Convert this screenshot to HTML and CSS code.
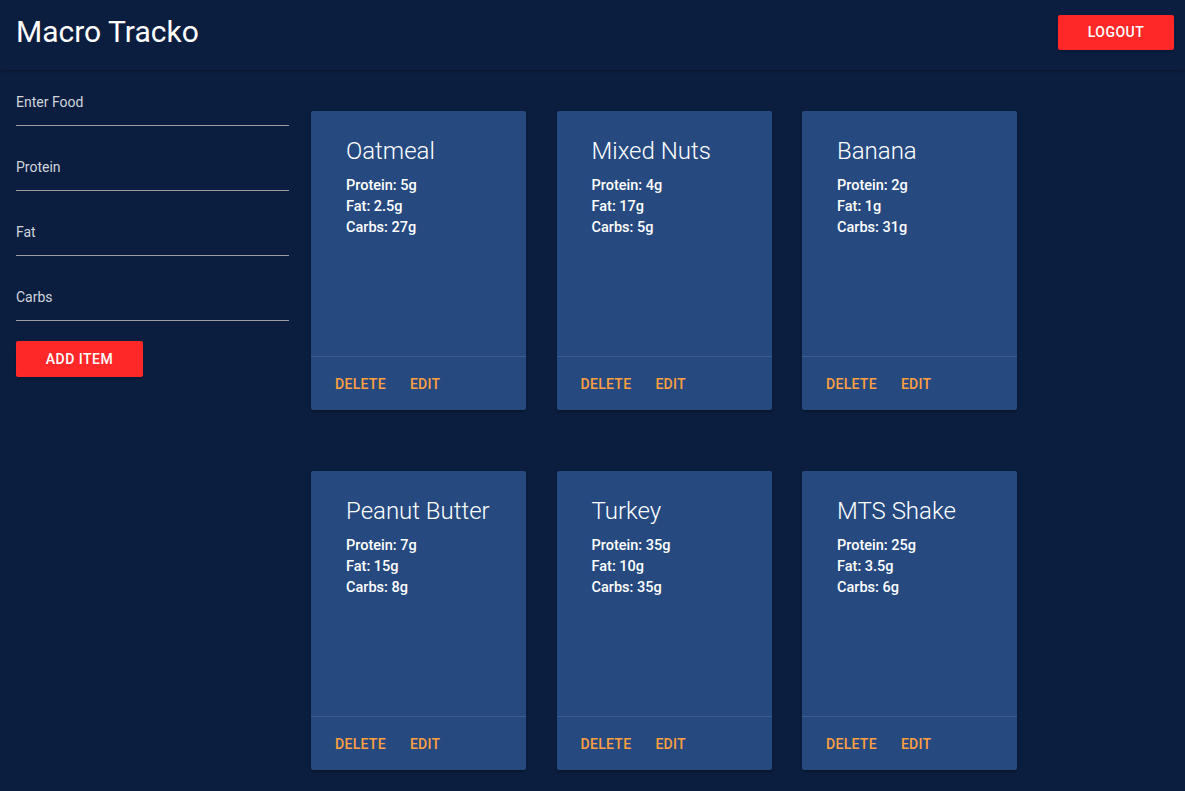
FILE: index.html
```html
<!DOCTYPE html>
<html>
<head>
<meta charset="utf-8">
<link rel="stylesheet" href="styles.css">
</head>
<body>
<header class="topbar">
  <h1 class="brand">Macro Tracko</h1>
  <button class="btn btn-logout">LOGOUT</button>
</header>
<div class="page">
  <aside class="sidebar">
    <div class="field"><label>Enter Food</label></div>
    <div class="field"><label>Protein</label></div>
    <div class="field"><label>Fat</label></div>
    <div class="field"><label>Carbs</label></div>
    <button class="btn btn-add">ADD ITEM</button>
  </aside>
  <main class="cards">
    <div class="card">
      <div class="card-content">
        <div class="card-title">Oatmeal</div>
        <p>Protein: 5g</p><p>Fat: 2.5g</p><p>Carbs: 27g</p>
      </div>
      <div class="card-action"><a>DELETE</a><a>EDIT</a></div>
    </div>
    <div class="card">
      <div class="card-content">
        <div class="card-title">Mixed Nuts</div>
        <p>Protein: 4g</p><p>Fat: 17g</p><p>Carbs: 5g</p>
      </div>
      <div class="card-action"><a>DELETE</a><a>EDIT</a></div>
    </div>
    <div class="card">
      <div class="card-content">
        <div class="card-title">Banana</div>
        <p>Protein: 2g</p><p>Fat: 1g</p><p>Carbs: 31g</p>
      </div>
      <div class="card-action"><a>DELETE</a><a>EDIT</a></div>
    </div>
    <div class="card">
      <div class="card-content">
        <div class="card-title">Peanut Butter</div>
        <p>Protein: 7g</p><p>Fat: 15g</p><p>Carbs: 8g</p>
      </div>
      <div class="card-action"><a>DELETE</a><a>EDIT</a></div>
    </div>
    <div class="card">
      <div class="card-content">
        <div class="card-title">Turkey</div>
        <p>Protein: 35g</p><p>Fat: 10g</p><p>Carbs: 35g</p>
      </div>
      <div class="card-action"><a>DELETE</a><a>EDIT</a></div>
    </div>
    <div class="card">
      <div class="card-content">
        <div class="card-title">MTS Shake</div>
        <p>Protein: 25g</p><p>Fat: 3.5g</p><p>Carbs: 6g</p>
      </div>
      <div class="card-action"><a>DELETE</a><a>EDIT</a></div>
    </div>
  </main>
</div>
</body>
</html>
```
FILE: styles.css
```css
* { box-sizing: border-box; }
html, body { margin: 0; padding: 0; }
body {
  background: #0c1e40;
  font-family: Roboto, "Liberation Sans", sans-serif;
  color: #fff;
  height: 791px;
  overflow: hidden;
}
.topbar {
  height: 70px;
  display: flex;
  align-items: center;
  justify-content: space-between;
  padding: 0 11px 0 16px;
  background: #0c1e40;
  box-shadow: 0 1px 3px rgba(0,0,0,0.35);
  position: relative;
  z-index: 1;
}
.brand {
  margin: 0;
  font-size: 30px;
  font-weight: 400;
  line-height: 1;
  margin-top: -6px;
}
.btn {
  border: none;
  background: #ff2828;
  color: #fff;
  font-family: Roboto, "Liberation Sans", sans-serif;
  font-size: 14px;
  font-weight: 500;
  letter-spacing: 0.5px;
  height: 36px;
  border-radius: 2px;
  box-shadow: 0 2px 3px rgba(0,0,0,0.2);
  padding: 0;
}
.btn-logout { width: 116px; height: 35px; margin-top: -6px; }
.page {
  display: flex;
  padding: 0 16px;
}
.sidebar {
  width: 273px;
  flex: none;
  padding-top: 24px;
}
.field {
  height: 65px;
  border-bottom: 1px solid #9e9e9e;
  display: flex;
  align-items: flex-start;
}
.field:first-child { height: 32px; }
.field label {
  font-size: 14px;
  color: #d0d4dc;
}
.field:not(:first-child) label { margin-top: 33px; }
.btn-add {
  width: 127px;
  margin-top: 20px;
}
.cards {
  margin-left: 22px;
  padding-top: 41px;
  display: grid;
  grid-template-columns: repeat(3, 215px);
  column-gap: 30.5px;
  row-gap: 61px;
  align-content: start;
}
.card {
  height: 299px;
  background: #264a80;
  border-radius: 2px;
  box-shadow: 0 2px 3px rgba(0,0,0,0.3);
  display: flex;
  flex-direction: column;
}
.card-content {
  flex: 1;
  padding: 24px 16px 0 35px;
}
.card-title {
  font-size: 24px;
  font-weight: 300;
  line-height: 32px;
  margin-bottom: 8px;
}
.card-content p {
  margin: 0;
  font-size: 14.5px;
  font-weight: 500;
  line-height: 21px;
}
.card-action {
  height: 54px;
  border-top: 1px solid rgba(255,255,255,0.1);
  display: flex;
  align-items: center;
  padding: 0 24px;
}
.card-action a {
  color: #ffa040;
  font-size: 14px;
  font-weight: 500;
  letter-spacing: 0.3px;
  margin-right: 24px;
}
```
